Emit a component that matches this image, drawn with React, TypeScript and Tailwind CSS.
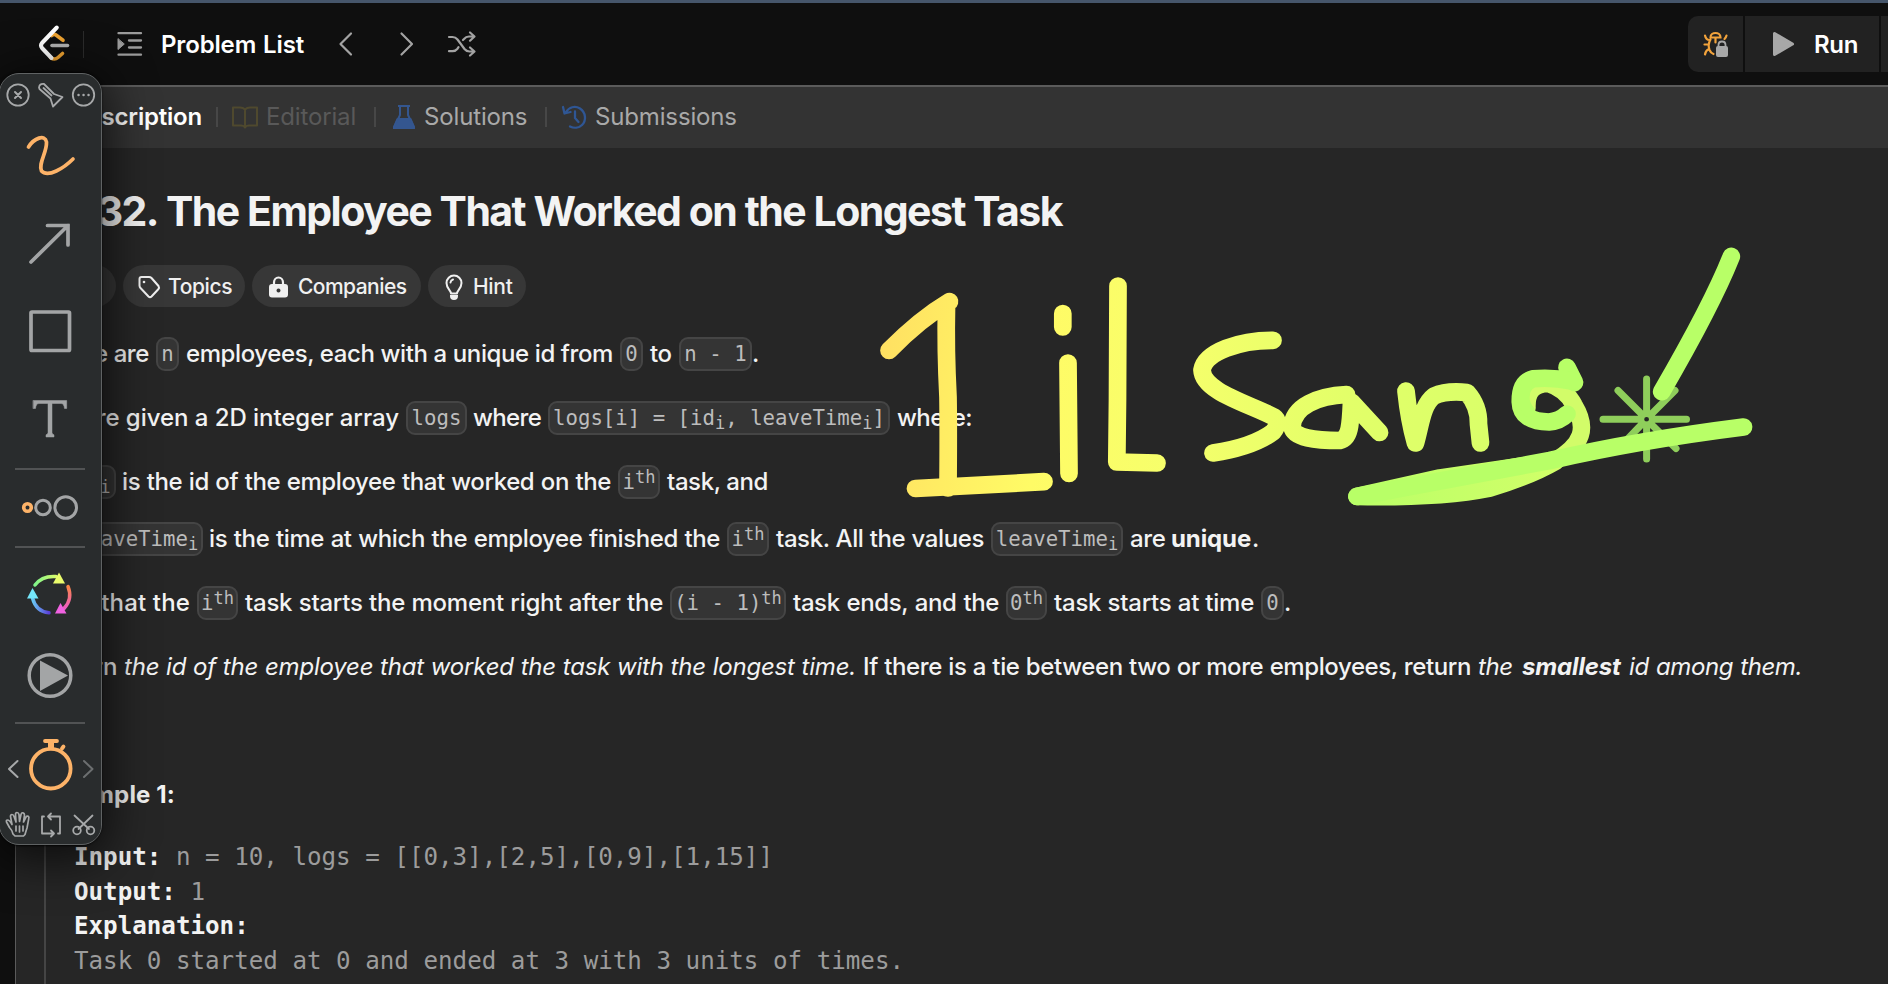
import React from "react";

const ROW = "flex h-[34px] items-center gap-[7px] whitespace-nowrap";
const FILL = "block shrink-0 [text-align-last:justify]";

function Seg({ className, children }: { className: string; children: React.ReactNode }) {
  return <span className={`${FILL} ${className}`}>{children}</span>;
}

function Lead({ className, children }: { className: string; children: React.ReactNode }) {
  return <span className={`flex shrink-0 justify-end ${className}`}>{children}</span>;
}

function Code({ className = "", children }: { className?: string; children: React.ReactNode }) {
  return (
    <code
      className={`flex h-[34px] shrink-0 items-center justify-center whitespace-pre rounded-[9px] border-2 border-[#454545] bg-[#343434] pt-px font-['DejaVu_Sans_Mono',monospace] text-[20.7px] font-normal leading-none tracking-normal text-[#bdbdbd] ${className}`}
    >
      {children}
    </code>
  );
}

const Sub = ({ children }: { children: string }) => (
  <span className="relative top-[5px] text-[17px]">{children}</span>
);
const Sup = ({ children }: { children: string }) => (
  <span className="relative -top-[5px] text-[17px]">{children}</span>
);

function Header() {
  return (
    <header className="flex h-[82px] shrink-0 items-center bg-[#0f0f0f] pl-[36px]">
      <svg width="36" height="40" viewBox="36 23 36 40" fill="none" strokeLinecap="round" strokeLinejoin="round">
        <path d="M51.500 34.500q2.500-2 4.500-.5l7 5.300M50.500 56.500q4 3 7.500 0l4.500-4" stroke="#f0a431" strokeWidth="3.600" />
        <path d="M56.800 26.500 42 42q-2 2.500 0 5l9.500 10" stroke="#fff" strokeWidth="4" />
        <path d="M52 44.500h15.500" stroke="#b3b3b3" strokeWidth="3.600" />
      </svg>
      <div className="ml-[11px] h-[27px] w-px bg-[#2b2b2b]" />
      <svg className="ml-[33px]" width="26" height="26" viewBox="117 31 26 26" fill="none" stroke="#9b9b9b" strokeWidth="2.300" strokeLinecap="round">
        <path d="M118.500 33.200h22.500M129 40.500h12M129 47.500h12M118.500 54.700h22.500" />
        <path d="M118 39v10.500l6-5.200z" fill="#9b9b9b" strokeWidth="1" strokeLinejoin="round" />
      </svg>
      <span className="ml-[18px] block w-[143px] whitespace-nowrap pt-px text-[24px] font-semibold tracking-[-0.150px] text-white [text-align-last:justify]">
        Problem List
      </span>
      <svg className="ml-[34px]" width="140" height="28" viewBox="338 30 140 28" fill="none" stroke="#a3a3a3" strokeWidth="2.200" strokeLinecap="round" strokeLinejoin="round">
        <path d="M351 33.500 340.500 44 351 54.500M401.500 33.500 412 44 401.500 54.500" />
        <path d="M449 37h3.500q3 0 5 2.500l7 9.500q2 2.500 5 2.500h4.500M449 51.200h3.500q3 0 5-2.500l1-1.500M463 40l1-1q2-2.500 5-2.500h4.500M470 32.500l4.500 4-4.500 4.200M470 47.500l4.500 4-4.500 4" />
      </svg>
      <div className="ml-auto flex h-[56px] gap-[2px]">
        <div className="flex w-[55px] items-center justify-center rounded-l-[10px] bg-[#222]">
          <svg width="28" height="28" viewBox="1702 30 28 28" fill="none" stroke="#f2a33c" strokeWidth="2.200" strokeLinecap="round">
            <path d="M1710.500 37.500c0-6 10-6 10 0zM1715.500 37.500v5M1710.500 39.500q-3 5-1 10.500 1.200 3 4 4M1705 35.500q1 4.500 4.500 4.500M1704.500 44.500h4M1705 54.500q.5-4 4-5.500M1726.500 35.500q-.5 2-2 3.500" />
            <path d="M1718.500 47v-2q0-3.500 3.500-3.500t3.500 3.500v2" stroke="#a8a8a8" strokeWidth="1.800" />
            <rect x="1716" y="46" width="12" height="11" rx="2" fill="#a8a8a8" stroke="none" />
          </svg>
        </div>
        <div className="flex w-[134px] items-center bg-[#222]">
          <svg className="ml-[27px]" width="23" height="26" viewBox="0 0 23 26">
            <path d="M2.500 2.500v21l18-10.500z" fill="#a8a8a8" stroke="#a8a8a8" strokeWidth="3" strokeLinejoin="round" />
          </svg>
          <span className="ml-[19px] pt-px text-[24px] font-semibold tracking-[-0.300px] text-white">Run</span>
        </div>
        <div className="w-[7px] bg-[#222]" />
      </div>
    </header>
  );
}

const TabRule = () => <span className="h-[20px] w-[2px] shrink-0 bg-[#474747]" />;

function Tabs() {
  return (
    <nav className="flex h-[63px] shrink-0 items-center whitespace-nowrap border-t-2 border-[#5b5b5b] bg-[#333] pb-[2px] text-[24px] tracking-[-0.150px] text-[#a9a9a9]">
      <Lead className="w-[186px] font-semibold tracking-[-0.200px] text-white">Description</Lead>
      <span className="w-[14px]" />
      <TabRule />
      <svg className="ml-[13px]" width="28" height="24" viewBox="231 104 28 24" fill="none" stroke="#4f492e" strokeWidth="2">
        <path d="M245 108.500q-2-2-5-2h-7v18h8q3 0 4 2 1-2 4-2h8v-18h-7q-3 0-5 2zM245 108.500v17" strokeLinejoin="round" />
      </svg>
      <Seg className="ml-[7px] w-[90px] text-[#595959]">Editorial</Seg>
      <span className="w-[18px]" />
      <TabRule />
      <svg className="ml-[17px]" width="22" height="26" viewBox="393 103 22 26" fill="none" stroke="#34568f" strokeWidth="2" strokeLinejoin="round">
        <path d="M398 105h12M400 105v9l-6 12.500h20l-6-12.500v-9" />
        <path d="M397.500 118h13l4 9h-21z" fill="#34568f" />
      </svg>
      <Seg className="ml-[9px] w-[104px]">Solutions</Seg>
      <span className="w-[17px]" />
      <TabRule />
      <svg className="ml-[14px]" width="27" height="26" viewBox="561 103 27 26" fill="none" stroke="#2f5694" strokeWidth="2.300" strokeLinecap="round" strokeLinejoin="round">
        <path d="M566 111c3-5 9-6.500 14-3.500 6 4 6.500 12 2 16.500-3 3-8 3.500-12 1.500M563 106l1.500 6.500 6-1.500M575 110.500v6.500l3.500 4" />
      </svg>
      <Seg className="ml-[7px] w-[140px]">Submissions</Seg>
    </nav>
  );
}

const CHIP = "flex h-[42px] items-center rounded-full bg-[#373737] pt-px text-[21px] font-medium text-[#f0f0f0]";

function Chips() {
  return (
    <div className="mt-[26px] flex gap-[7px]">
      <div className="h-[42px] w-[100px] rounded-full bg-[#373737]" />
      <div className={`${CHIP} w-[122px] tracking-[-0.400px]`}>
        <svg className="ml-[14px]" width="24" height="24" viewBox="137 274 24 24" fill="none" stroke="#f0f0f0" strokeWidth="2" strokeLinejoin="round">
          <path d="M139.500 278q0-2 2-2h7.500q1.500 0 2.500 1l7 8q1 1.500 0 3l-7 7.500q-1.500 1.500-3 0l-8-8.500q-1-1-1-2.500z" />
          <circle cx="144" cy="281" r="1.300" fill="#f0f0f0" stroke="none" />
        </svg>
        <span className="ml-[7px]">Topics</span>
      </div>
      <div className={`${CHIP} w-[169px] tracking-[-0.550px]`}>
        <svg className="ml-[16px]" width="21" height="24" viewBox="0 0 21 24" fill="none">
          <path d="M6 10V7.500a4.500 5 0 0 1 9 0V10" stroke="#f0f0f0" strokeWidth="2.200" />
          <path fillRule="evenodd" d="M4 9h13q3 0 3 3v7.500q0 3-3 3H4q-3 0-3-3V12q0-3 3-3zM10.500 13.500a2 2 0 1 0 .01 0z" fill="#f0f0f0" />
        </svg>
        <span className="ml-[9px]">Companies</span>
      </div>
      <div className={`${CHIP} w-[98px] tracking-[-0.300px]`}>
        <svg className="ml-[16px]" width="20" height="28" viewBox="0 0 20 28" fill="none" stroke="#f0f0f0" strokeWidth="2" strokeLinecap="round">
          <path d="M7 20.500c0-3-4.500-5-4.500-10.500a7.500 7.500 0 0 1 15 0c0 5.500-4.500 7.500-4.500 10.500zM6.500 9.500a3.500 3.500 0 0 1 2.500-3" strokeLinejoin="round" />
          <path d="M7 23h6q0 3-3 3t-3-3z" fill="#f0f0f0" />
        </svg>
        <span className="ml-[9px]">Hint</span>
      </div>
    </div>
  );
}

function Statement() {
  return (
    <main className="grow bg-[#262626] text-[24px] font-[450] leading-[34px] tracking-[-0.400px] text-[#f3f3f3]">
      <h1 className="flex h-[56px] items-center whitespace-nowrap text-[41px] font-[650] tracking-[-1.550px]">
        <Lead className="w-[142px]">2332.</Lead>
        <Seg className="ml-[8px] w-[896px]">The Employee That Worked on the Longest Task</Seg>
      </h1>
      <Chips />
      <div className={`${ROW} mt-[30px]`}>
        <Lead className="w-[133px]">There are</Lead>
        <Code className="w-[23px]">n</Code>
        <Seg className="w-[427px]">employees, each with a unique id from</Seg>
        <Code className="w-[23px]">0</Code>
        <Seg className="w-[22px]">to</Seg>
        <Code className="w-[73px]">n - 1</Code>
        <span className="-ml-[7px]">.</span>
      </div>
      <div className={`${ROW} mt-[30px]`}>
        <Lead className="w-[383px] tracking-[-0.050px]">You are given a 2D integer array</Lead>
        <Code className="w-[61px]">logs</Code>
        <Seg className="-ml-px w-[68px] tracking-[-0.650px]">where</Seg>
        <Code className="w-[342px]">logs[i] = [id<Sub>i</Sub>, leaveTime<Sub>i</Sub>]</Code>
        <Seg className="w-[74px] tracking-[-0.600px]">where:</Seg>
      </div>
      <div className={`${ROW} mt-[30px]`}>
        <Lead className="w-[100px]"><Code className="w-[46px]">id<Sub>i</Sub></Code></Lead>
        <Seg className="-ml-px w-[489px]">is the id of the employee that worked on the</Seg>
        <Code className="w-[42px]">i<Sup>th</Sup></Code>
        <Seg className="w-[101px]">task, and</Seg>
      </div>
      <div className={`${ROW} mt-[23px]`}>
        <Lead className="w-[187px]"><Code className="w-[132px]">leaveTime<Sub>i</Sub></Code></Lead>
        <Seg className="-ml-px w-[511px]">is the time at which the employee finished the</Seg>
        <Code className="w-[42px]">i<Sup>th</Sup></Code>
        <Seg className="w-[208px]">task. All the values</Seg>
        <Code className="w-[132px]">leaveTime<Sub>i</Sub></Code>
        <Seg className="w-[35px]">are</Seg>
        <Seg className="-ml-px w-[81px] font-bold tracking-[-0.100px]">unique</Seg>
        <span className="-ml-[7px]">.</span>
      </div>
      <div className={`${ROW} mt-[30px]`}>
        <Lead className="w-[174px] tracking-[0.150px]">Note that the</Lead>
        <Code className="w-[41px]">i<Sup>th</Sup></Code>
        <Seg className="w-[418px] tracking-[-0.250px]">task starts the moment right after the</Seg>
        <Code className="w-[116px]">(i - 1)<Sup>th</Sup></Code>
        <Seg className="w-[206px]">task ends, and the</Seg>
        <Code className="w-[41px]">0<Sup>th</Sup></Code>
        <Seg className="w-[200px] tracking-[-0.250px]">task starts at time</Seg>
        <Code className="w-[23px]">0</Code>
        <span className="-ml-[7px]">.</span>
      </div>
      <div className={`${ROW} mt-[30px]`}>
        <Lead className="w-[101px]">Return</Lead>
        <Seg className="w-[732px] italic tracking-[-0.200px]">the id of the employee that worked the task with the longest time.</Seg>
        <Seg className="w-[608px]">If there is a tie between two or more employees, return</Seg>
        <Seg className="w-[35px] italic">the</Seg>
        <Seg className="ml-[2px] w-[100px] font-bold italic tracking-[-0.150px]">smallest</Seg>
        <Seg className="w-[173px] italic">id among them.</Seg>
      </div>
      <div className={`${ROW} mt-[94px] font-bold tracking-[0.150px]`}>
        <Lead className="w-[159px]">Example 1:</Lead>
      </div>
      <pre className="ml-[28px] mt-[28px] border-l-2 border-[#454545] pl-[28px] font-['DejaVu_Sans_Mono',monospace] text-[24.200px] font-normal leading-[34.500px] tracking-normal text-[#9c9c9c]">
        <b className="text-[#f3f3f3]">Input:</b>{" n = 10, logs = [[0,3],[2,5],[0,9],[1,15]]\n"}
        <b className="text-[#f3f3f3]">Output:</b>{" 1\n"}
        <b className="text-[#f3f3f3]">Explanation:</b>{"\nTask 0 started at 0 and ended at 3 with 3 units of times.\nTask 1 started at 3 and ended at 5 with 2 units of times."}
      </pre>
    </main>
  );
}

function Ink() {
  return (
    <svg className="pointer-events-none absolute inset-0" width="1888" height="984" viewBox="0 0 1888 984" fill="none" strokeLinecap="round" strokeLinejoin="round">
      <defs>
        <linearGradient id="ink" gradientUnits="userSpaceOnUse" x1="880" y1="300" x2="1560" y2="380">
          <stop offset="0" stopColor="#ffdf62" />
          <stop offset="0.120" stopColor="#ffed63" />
          <stop offset="0.250" stopColor="#fffb66" />
          <stop offset="0.450" stopColor="#f6ff6b" />
          <stop offset="0.700" stopColor="#e2ff69" />
          <stop offset="1" stopColor="#d6ff69" />
        </linearGradient>
        <linearGradient id="swoosh" gradientUnits="userSpaceOnUse" x1="1350" y1="0" x2="1570" y2="0">
          <stop offset="0" stopColor="#baff67" />
          <stop offset="1" stopColor="#d2ff69" />
        </linearGradient>
      </defs>
      <g stroke="#8fce5b" strokeWidth="7">
        <path d="M1646.600 413v-34M1646.600 425v34M1640.500 419.300h-37.500M1652.500 419.300h34M1642 414.500l-24-24M1651 414.500l24-24M1642 424l-24 25M1651 424l25 24.500" />
        <circle cx="1646.600" cy="419.300" r="4.300" strokeWidth="3.800" />
      </g>
      <g stroke="url(#ink)" strokeWidth="17.700">
        <path d="M889 350.500Q920 319 949.500 301.500M946.500 306Q945.500 350 948 397 948.500 430 948 488" />
        <path d="M915.500 488.500 1044 481.700M1062.800 313.500v13.500M1068 363l1 110.500M1118 286 1117.500 400 1116.800 462 1157 463" />
        <path d="M1273 340.300C1240 340 1205 352 1202 370C1203 392 1250 404 1274 417Q1281 422 1273 432Q1253 447 1213 453" />
        <path d="M1346.500 394.500C1318 396 1293 406 1292 427C1294 438 1315 440.500 1340 440.500C1350 438 1350.500 425 1351.500 402L1379.600 432.500" />
        <path d="M1406 391Q1409 420 1415.500 443C1421 424 1422 405 1434 396Q1446 390.500 1467 392.500Q1479 406 1478.500 424L1480.500 443" />
      </g>
      <path d="M1357 496.500Q1440 498 1490 488Q1530 476 1556 461L1440 478z" fill="url(#swoosh)" stroke="url(#swoosh)" strokeWidth="17.700" />
      <path d="M1527 408Q1526 384 1548 383.500Q1566 389 1574 405C1588 428 1583 444 1555 461" stroke="#d2fc69" strokeWidth="17.500" />
      <g stroke="#b8ff67" strokeWidth="17.700">
        <path d="M1567 367.500 1574.500 382.500" />
        <path d="M1572 381Q1552 377 1533 378.800Q1520 382 1520.300 402Q1521 421.500 1549 422Q1560 421 1567 414" />
        <path d="M1527 384Q1519 400 1529 411" strokeWidth="12" />
        <path d="M1357 496.500 1550 460.500Q1640 440 1743.500 427M1731.300 256.500Q1712 305 1661.700 391.700" />
      </g>
    </svg>
  );
}

const ToolRule = () => <div className="ml-[15px] h-[2px] w-[70px] shrink-0 bg-[#515354]" />;

function Toolbar() {
  return (
    <aside className="absolute left-0 top-[73px] flex h-[772px] w-[101px] flex-col rounded-[20px] bg-[#292c2d] shadow-[0_8px_48px_6px_rgba(0,0,0,0.700),0_0_2px_1px_rgba(0,0,0,0.800)]">
      <svg className="shrink-0" width="101" height="44" viewBox="0 73 101 44" fill="none" stroke="#a7a9aa" strokeWidth="1.800" strokeLinecap="round" strokeLinejoin="round">
        <circle cx="18" cy="95" r="10.700" />
        <path d="M15 92l6 6M21 92l-6 6" strokeWidth="2" />
        <path d="M39 87.500q.5-4 5-3.500l10 10 8.500 3-9.500 9.500-2.500-8-11-9.500zM43.500 88l8 7.500" />
        <circle cx="83.500" cy="95" r="10.700" />
        <path d="M78.500 95h.1M83.500 95h.1M88.500 95h.1" strokeWidth="2.400" />
      </svg>
      <svg className="shrink-0" width="101" height="350" viewBox="0 117 101 350" fill="none" stroke="#a3a5a6" strokeWidth="3.700" strokeLinecap="round" strokeLinejoin="round">
        <path d="M28.500 147C34 138 45 134 46.500 142C47 153 38 163 41.500 171C48 178 64 168 73 159" stroke="#fdb368" />
        <path d="M31 262 68 225.500M47.500 225.500H68V245" strokeLinejoin="miter" />
        <rect x="31" y="312" width="38.500" height="38.500" rx="1" />
        <path d="M33.300 400.500H66.700V408.500H64.500Q64 403.500 61 403.500H52V432.500Q52 434.500 54 434.800V437H46V434.800Q48 434.500 48 432.500V403.500H39Q36 403.500 35.500 408.500H33.300Z" fill="#a3a5a6" strokeWidth="0.500" />
      </svg>
      <div className="h-px shrink-0" />
      <ToolRule />
      <svg className="shrink-0" width="101" height="76" viewBox="0 470 101 76" fill="none" stroke="#a3a5a6" strokeWidth="3">
        <circle cx="27.500" cy="507.500" r="3.800" stroke="#fdb368" strokeWidth="3.600" />
        <circle cx="43" cy="507.500" r="7.300" />
        <circle cx="65.700" cy="507.500" r="10.800" />
      </svg>
      <ToolRule />
      <svg className="shrink-0" width="101" height="174" viewBox="0 548 101 174" fill="none" strokeWidth="3.500" strokeLinecap="round">
        <defs>
          <linearGradient id="arcTop"><stop stopColor="#7ff58a" /><stop offset="1" stopColor="#d8fb6c" /></linearGradient>
          <linearGradient id="arcRight" x2="0" y2="1"><stop stopColor="#f98445" /><stop offset="1" stopColor="#ee5cc4" /></linearGradient>
          <linearGradient id="arcLeft"><stop stopColor="#69c9f5" /><stop offset="1" stopColor="#5a3fd8" /></linearGradient>
        </defs>
        <path d="M35 585Q42 575.500 56 576.500" stroke="url(#arcTop)" />
        <path d="M59 572.500 65 583.500H53z" fill="#eafc6c" />
        <path d="M68 586.500Q73 599 64 608.500" stroke="url(#arcRight)" />
        <path d="M60.500 603 66.500 613.500H55z" fill="#f062e0" />
        <path d="M32.500 598Q36 611.500 49 612.800" stroke="url(#arcLeft)" />
        <path d="M32.500 588 38.500 598.500H27z" fill="#74e6fa" />
        <circle cx="50" cy="675.500" r="20.800" stroke="#a3a5a6" />
        <path d="M40 660.500 68 675.500 40 691z" fill="#a3a5a6" />
      </svg>
      <ToolRule />
      <svg className="shrink-0" width="101" height="120" viewBox="0 724 101 120" fill="none" stroke="#a7a9aa" strokeWidth="2" strokeLinecap="round" strokeLinejoin="round">
        <g stroke="#fdb368" strokeWidth="3.800">
          <circle cx="50.800" cy="768.700" r="19.800" />
          <path d="M45 741h12M62 748.500l1.500-2" />
          <path d="M51 742v6" strokeWidth="6" strokeLinecap="butt" />
        </g>
        <path d="M17.500 761 9 769l8.500 8" />
        <path d="M84 761l8.500 8-8.500 8" stroke="#6c6f70" />
        <path d="M13 834q-1-4-3.500-6.500L6.500 822q-.5-2 1-2 2 0 4.500 4.500l-1.500-8q0-2 1.500-2t2 2l2 5.500-.5-7.500q0-2 1.500-2t2 2l.5 7 1.500-7q.5-2 2-1.700t1.500 2.200l-1 7 2.500-5q1-1.500 2.200-.7t.5 2.500L27 828q-1 3-2 6.500l-1.500 1.500H15zM16 826v5M19.500 826v6M23 826v5" strokeWidth="1.700" />
        <path d="M44 816.500h-2v17h11.500M58 833.500h2v-17H48.500M51 813.500l-3 3 3 3M51 830.500l3 3-3 3" strokeWidth="1.800" />
        <path d="M74.500 815.500 89 829M92.500 815.500 78.500 829" strokeWidth="1.800" />
        <circle cx="77" cy="830.500" r="3.800" strokeWidth="1.800" />
        <circle cx="90.500" cy="830.500" r="3.800" strokeWidth="1.800" />
      </svg>
      <div className="pointer-events-none absolute -left-[1px] -right-px inset-y-0 rounded-[20px] border-[1.500px] border-[#5f6263]" />
    </aside>
  );
}

export default function App() {
  return (
    <div className="relative flex h-[984px] w-[1888px] flex-col overflow-hidden bg-[#0f0f0f] font-['Inter',sans-serif]">
      <div className="h-[3px] shrink-0 bg-[#46566b]" />
      <Header />
      <div className="ml-[15px] flex grow flex-col border-l border-[#5b5b5b]">
        <Tabs />
        <div className="h-[35px] shrink-0 bg-[#262626]" />
        <Statement />
      </div>
      <Ink />
      <Toolbar />
    </div>
  );
}
